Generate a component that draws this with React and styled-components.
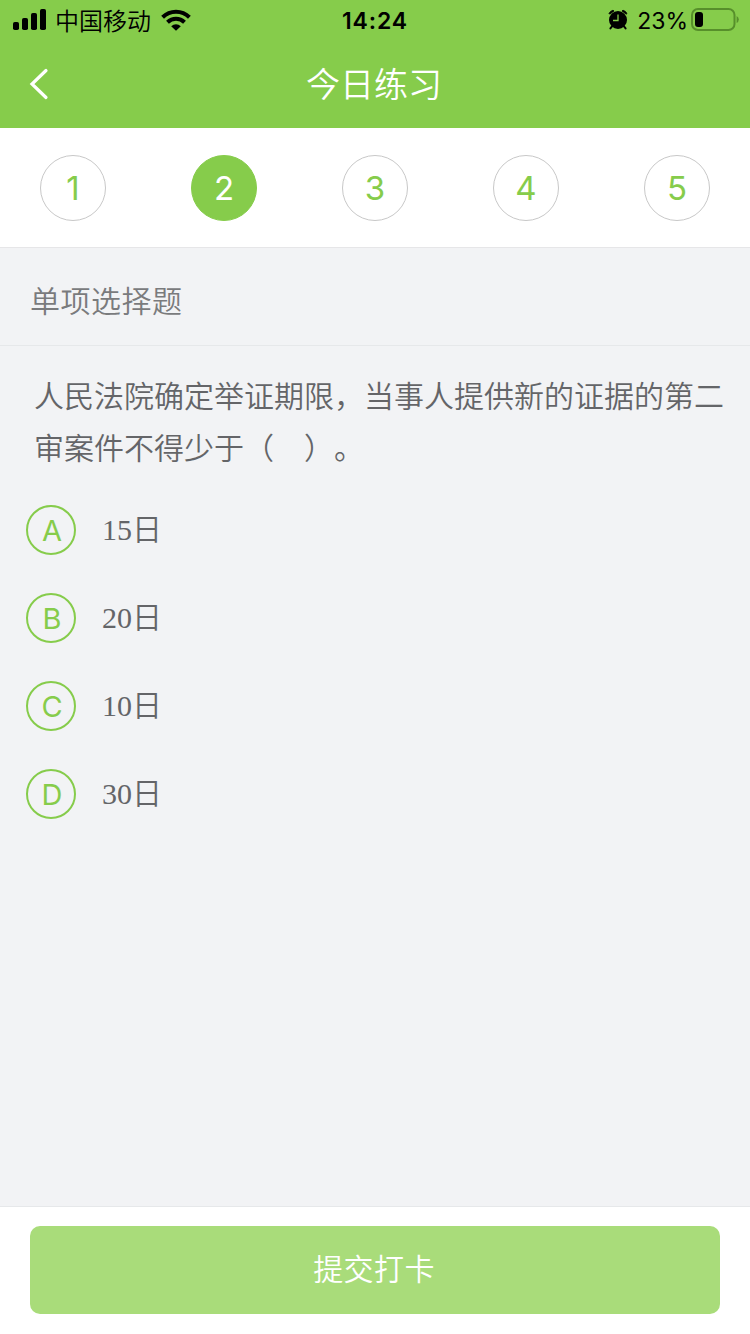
import React, { useState } from "react";
import styled, { createGlobalStyle } from "styled-components";

const GlobalStyle = createGlobalStyle`
  * {
    box-sizing: border-box;
  }
  body {
    margin: 0;
    font-family: Inter, "Noto Sans CJK SC", sans-serif;
    font-weight: 350;
    background: #f2f3f5;
  }
`;

const Page = styled.div`
  display: flex;
  flex-direction: column;
  height: 1334px;
  width: 750px;
  overflow: hidden;
  background: #f2f3f5;
`;

const StatusBar = styled.div`
  display: grid;
  grid-template-columns: 1fr auto 1fr;
  align-items: center;
  height: 40px;
  padding: 0 11px 0 13px;
  background: #86cc4b;
  color: #000;
`;

const StatusLeft = styled.div`
  display: flex;
  align-items: center;
`;

const StatusRight = styled(StatusLeft)`
  justify-content: flex-end;
`;

const Carrier = styled.span`
  margin: 0 10px 0 8px;
  font-size: 24px;
  line-height: 36px;
  padding-top: 4px;
`;

const Clock = styled.span`
  padding: 2px 2px 0 0;
  font-size: 23px;
  font-weight: 600;
  letter-spacing: 0.9px;
  line-height: 38px;
`;

const Percent = styled.span`
  margin: 0 3px 0 9px;
  padding-top: 2px;
  font-size: 23px;
  font-weight: 400;
  line-height: 38px;
`;

const NavBar = styled.div`
  display: grid;
  grid-template-columns: 80px 1fr 80px;
  align-items: center;
  height: 88px;
  background: #86cc4b;
`;

const BackButton = styled.button`
  display: flex;
  padding: 0 0 0 28px;
  border: none;
  background: none;
`;

const Title = styled.h1`
  margin: 0;
  padding: 2px 2px 0 0;
  color: #fff;
  font-size: 34px;
  font-weight: 350;
  line-height: 84px;
  text-align: center;
`;

const Steps = styled.div`
  display: flex;
  justify-content: space-between;
  height: 120px;
  padding: 27px 40px 0;
  border-bottom: 1px solid #e6e6e8;
  background: #fff;
`;

const Step = styled.button`
  width: 66px;
  height: 66px;
  padding: 0;
  border: 1px solid ${(props) => (props.$active ? "#86cc4b" : "#c8c8c8")};
  border-radius: 50%;
  background: ${(props) => (props.$active ? "#86cc4b" : "#fff")};
  color: ${(props) => (props.$active ? "#fff" : "#86cc4b")};
  font-family: inherit;
  font-size: 33px;
  font-weight: 400;
  line-height: 64px;
`;

const QuestionType = styled.div`
  height: 98px;
  padding-left: 30px;
  border-bottom: 1px solid #e6e8ea;
  color: #7a7b7d;
  font-size: 30px;
  letter-spacing: 0.5px;
  line-height: 107px;
`;

const Question = styled.p`
  margin: 0;
  padding: 22px 20px 2px 34px;
  color: #646568;
  font-family: "Noto Sans CJK SC", sans-serif;
  font-size: 30px;
  line-height: 52px;
  text-spacing-trim: space-all;
`;

const Options = styled.div`
  display: flex;
  flex: 1;
  flex-direction: column;
  gap: 38px;
  padding: 31px 26px 0;
`;

const Option = styled.div`
  display: flex;
  align-items: center;
  height: 50px;
`;

const OptionLetter = styled.span`
  width: 50px;
  height: 50px;
  margin-right: 26px;
  padding-left: 2px;
  border: 2px solid #86cc4b;
  border-radius: 50%;
  color: #86cc4b;
  font-size: 29px;
  font-weight: 400;
  line-height: 48px;
  text-align: center;
`;

const OptionText = styled.span`
  color: #646568;
  font-family: "Liberation Serif", "Noto Sans CJK SC", serif;
  font-size: 30px;
  line-height: 50px;
`;

const Footer = styled.div`
  height: 128px;
  padding: 19px 30px 0;
  border-top: 1px solid #e6e8ea;
  background: #fff;
`;

const SubmitButton = styled.button`
  width: 100%;
  height: 88px;
  padding: 0 2px 2px 0;
  border: none;
  border-radius: 10px;
  background: #a9dc7a;
  color: #fff;
  font-family: inherit;
  font-size: 30px;
  font-weight: 350;
  letter-spacing: 0.4px;
  line-height: 86px;
`;

const SignalIcon = () => (
  <svg width="34" height="22" viewBox="0 0 34 22">
    <rect x="0" y="13" width="6" height="8" rx="1.8" />
    <rect x="9" y="9" width="6" height="12" rx="1.8" />
    <rect x="18" y="4" width="6" height="17" rx="1.8" />
    <rect x="27" y="0" width="6" height="21" rx="1.8" />
  </svg>
);

const WifiIcon = () => (
  <svg width="30" height="22" viewBox="0 0 30 22">
    <g fill="none" stroke="#000" strokeWidth="4">
      <path d="M1.6 8.2a19.2 19.2 0 0 1 26.8 0" />
      <path d="M6.5 13.3a12.2 12.2 0 0 1 17 0" />
    </g>
    <path d="M15 21.8l-4.8-4.6a7 7 0 0 1 9.6 0z" />
  </svg>
);

const AlarmIcon = () => (
  <svg width="20" height="22" viewBox="0 0 20 22">
    <circle cx="10" cy="11" r="9" />
    <path
      d="M1 4.4Q2.2 2 5 1.2l1 .8L1.8 5.2zM19 4.4Q17.8 2 15 1.2l-1 .8 4.2 3.2z"
      stroke="#000"
      strokeWidth="0.8"
      strokeLinejoin="round"
    />
    <path
      d="M4.2 17.2l-1.8 2.2M15.8 17.2l1.8 2.2"
      stroke="#000"
      strokeWidth="2"
      strokeLinecap="round"
    />
    <path d="M10 5.5v6H5" fill="none" stroke="#86cc4b" strokeWidth="1.3" />
  </svg>
);

const BatteryIcon = () => (
  <svg width="48" height="24" viewBox="0 0 48 24">
    <rect
      x="1"
      y="1"
      width="42.5"
      height="21"
      rx="6"
      fill="none"
      stroke="#578f2b"
      strokeWidth="2"
    />
    <path d="M45.6 8q2.2 1 2.2 3.5t-2.2 3.5z" fill="#578f2b" />
    <rect x="4" y="4" width="8" height="15" rx="3" />
  </svg>
);

const BackIcon = () => (
  <svg width="22" height="32" viewBox="0 0 22 32">
    <path
      d="M18 2.5L4 16l14 13.5"
      fill="none"
      stroke="#fff"
      strokeWidth="3.2"
      strokeLinecap="round"
    />
  </svg>
);

const steps = [1, 2, 3, 4, 5];

const question =
  "人民法院确定举证期限\uff0c当事人提供新的证据的第二审案件不得少于\uff08\u3000\uff09\u3002";

const options = [
  { letter: "A", text: "15日" },
  { letter: "B", text: "20日" },
  { letter: "C", text: "10日" },
  { letter: "D", text: "30日" },
];

const App = () => {
  const [current, setCurrent] = useState(2);

  return (
    <>
      <GlobalStyle />
      <Page>
        <StatusBar>
          <StatusLeft>
            <SignalIcon />
            <Carrier>中国移动</Carrier>
            <WifiIcon />
          </StatusLeft>
          <Clock>14:24</Clock>
          <StatusRight>
            <AlarmIcon />
            <Percent>23%</Percent>
            <BatteryIcon />
          </StatusRight>
        </StatusBar>
        <NavBar>
          <BackButton>
            <BackIcon />
          </BackButton>
          <Title>今日练习</Title>
        </NavBar>
        <Steps>
          {steps.map((step) => (
            <Step
              key={step}
              $active={step === current}
              onClick={() => setCurrent(step)}
            >
              {step}
            </Step>
          ))}
        </Steps>
        <QuestionType>单项选择题</QuestionType>
        <Question>{question}</Question>
        <Options>
          {options.map((option) => (
            <Option key={option.letter}>
              <OptionLetter>{option.letter}</OptionLetter>
              <OptionText>{option.text}</OptionText>
            </Option>
          ))}
        </Options>
        <Footer>
          <SubmitButton>提交打卡</SubmitButton>
        </Footer>
      </Page>
    </>
  );
};

export default App;
